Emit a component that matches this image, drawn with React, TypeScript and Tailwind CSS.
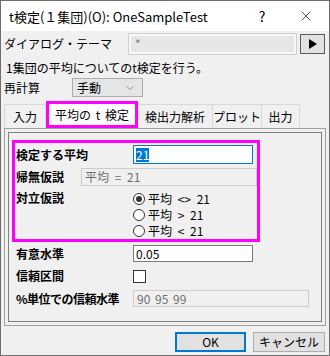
import { ChevronDown, X } from 'lucide-react';

const font = { fontFamily: '"Noto Sans CJK JP", "Noto Sans", sans-serif' };

function Radio({ checked, label }: { checked?: boolean; label: string }) {
  return (
    <div className="flex h-[16px] items-center">
      <div className="flex h-[12px] w-[12px] items-center justify-center rounded-full border border-[#333333] bg-white">
        {checked && <div className="h-[6px] w-[6px] rounded-full bg-[#333333]" />}
      </div>
      <span className="ml-[3px] leading-none [word-spacing:3px]">{label}</span>
    </div>
  );
}

export default function App() {
  const tabs = ['検出力解析', 'プロット', '出力'];
  const tabWidths = ['w-[75px]', 'w-[49px]', 'w-[38px]'];

  return (
    <div
      className="flex h-[356px] w-[330px] flex-col border border-[#6e6e6e] bg-[#f0f0f0] text-[12px] text-black"
      style={font}
    >
      {/* title bar */}
      <div className="flex h-[30px] items-center bg-white pl-[8px] pr-[1px]">
        <span className="text-[13px] leading-none">t検定(１集団)(O): OneSampleTest</span>
        <div className="ml-auto flex items-center">
          <span className="w-[44px] text-center text-[14px] leading-none">?</span>
          <span className="flex w-[44px] justify-center">
            <X size={16} strokeWidth={1} />
          </span>
        </div>
      </div>

      {/* theme row */}
      <div className="mt-[2px] flex h-[22px] items-center">
        <span className="w-[127px] pl-[3px] leading-none">ダイアログ・テーマ</span>
        <div className="h-[22px] w-[169px] border border-[#cfcfcf] bg-[#f7f7f7] p-[2px]">
          <div className="flex h-full items-center bg-[#e6e6e6] pl-[4px] text-[#7a7a7a] leading-none">*</div>
        </div>
        <div className="ml-[3px] flex h-[20px] w-[25px] items-center justify-center border border-[#5a5a5a] bg-[#e1e1e1]">
          <svg width="8" height="10" viewBox="0 0 8 10">
            <polygon points="0,0 8,5 0,10" fill="#000" />
          </svg>
        </div>
      </div>

      <div className="mt-[5px] flex h-[16px] items-center pl-[5px] leading-none">
        1集団の平均についてのt検定を行う。
      </div>

      {/* recalc */}
      <div className="mt-[2px] flex h-[19px] items-center">
        <span className="w-[71px] pl-[3px] leading-none">再計算</span>
        <div className="flex h-[19px] w-[71px] items-center border border-[#adadad] bg-[#e5e5e5] pl-[4px] pr-[6px]">
          <span className="leading-none">手動</span>
          <ChevronDown size={12} strokeWidth={1.2} className="ml-auto text-[#555]" />
        </div>
      </div>

      {/* tabs */}
      <div className="mt-[4px] flex h-[27px] items-end pl-[3px]">
        <div className="flex h-[24px] w-[42px] items-center justify-center border border-b-0 border-[#d9d9d9] leading-none">
          入力
        </div>
        <div className="flex h-[27px] w-[92px] items-center justify-center border-[3px] border-[#ff00ff] bg-white leading-none [word-spacing:2px]">
          平均の t 検定
        </div>
        {tabs.map((t, i) => (
          <div
            key={t}
            className={`flex h-[24px] items-center justify-center border border-b-0 border-l-0 border-[#d9d9d9] leading-none ${tabWidths[i]}`}
          >
            {t}
          </div>
        ))}
      </div>

      {/* panel */}
      <div className="ml-[3px] flex h-[198px] w-[322px] border border-[#a0a0a0]">
        <div className="m-[3px] flex flex-1 flex-col border border-[#808080] pl-[3px] pt-[7px]">
          <div className="flex h-[102px] w-[248px] flex-col border-[3px] border-[#ff00ff]">
            <div className="mt-[2px] flex h-[19px] items-center">
              <span className="w-[118px] pl-[1px] font-bold leading-none">検定する平均</span>
              <div className="flex h-[19px] w-[120px] items-center border border-[#0078d7] bg-white pl-[2px]">
                <span className="bg-[#0078d7] leading-[14px] text-white">21</span>
              </div>
            </div>
            <div className="mt-[4px] flex h-[18px] items-center">
              <span className="w-[118px] pl-[1px] font-bold leading-none">帰無仮説</span>
              <div className="flex h-[18px] w-[176px] shrink-0 items-center border border-[#cccccc] bg-[#f0f0f0] pl-[3px] text-[#6d6d6d] leading-none [word-spacing:3px]">
                平均 = 21
              </div>
            </div>
            <div className="mt-[3px] flex">
              <span className="mt-[3px] w-[118px] pl-[1px] font-bold leading-none">対立仮説</span>
              <div className="mt-[2px] flex flex-col">
                <Radio checked label="平均 <> 21" />
                <Radio label="平均 > 21" />
                <Radio label="平均 < 21" />
              </div>
            </div>
          </div>

          <div className="mt-[3px] flex h-[17px] items-center">
            <span className="w-[121px] pl-[4px] font-bold leading-none">有意水準</span>
            <div className="flex h-[17px] w-[120px] items-center border border-[#7a7a7a] bg-white pl-[2px] leading-none">
              0.05
            </div>
          </div>
          <div className="mt-[7px] flex h-[14px] items-center">
            <span className="w-[121px] pl-[4px] font-bold leading-none">信頼区間</span>
            <div className="h-[13px] w-[13px] border border-[#333333] bg-white" />
          </div>
          <div className="mt-[7px] flex h-[17px] items-center">
            <span className="w-[121px] pl-[4px] font-bold leading-none tracking-[-0.5px]">%単位での信頼水準</span>
            <div className="flex h-[17px] w-[176px] items-center border border-[#cccccc] bg-[#f0f0f0] pl-[3px] text-[#6d6d6d] leading-none [word-spacing:2px]">
              90 95 99
            </div>
          </div>
        </div>
      </div>

      {/* buttons */}
      <div className="mt-[6px] flex justify-end gap-[7px] pr-[4px]">
        <div className="flex h-[20px] w-[71px] items-center justify-center border-2 border-[#0078d7] bg-[#e1e1e1] leading-none">
          OK
        </div>
        <div className="flex h-[20px] w-[72px] items-center justify-center border border-[#adadad] bg-[#e1e1e1] leading-none">
          キャンセル
        </div>
      </div>
    </div>
  );
}
